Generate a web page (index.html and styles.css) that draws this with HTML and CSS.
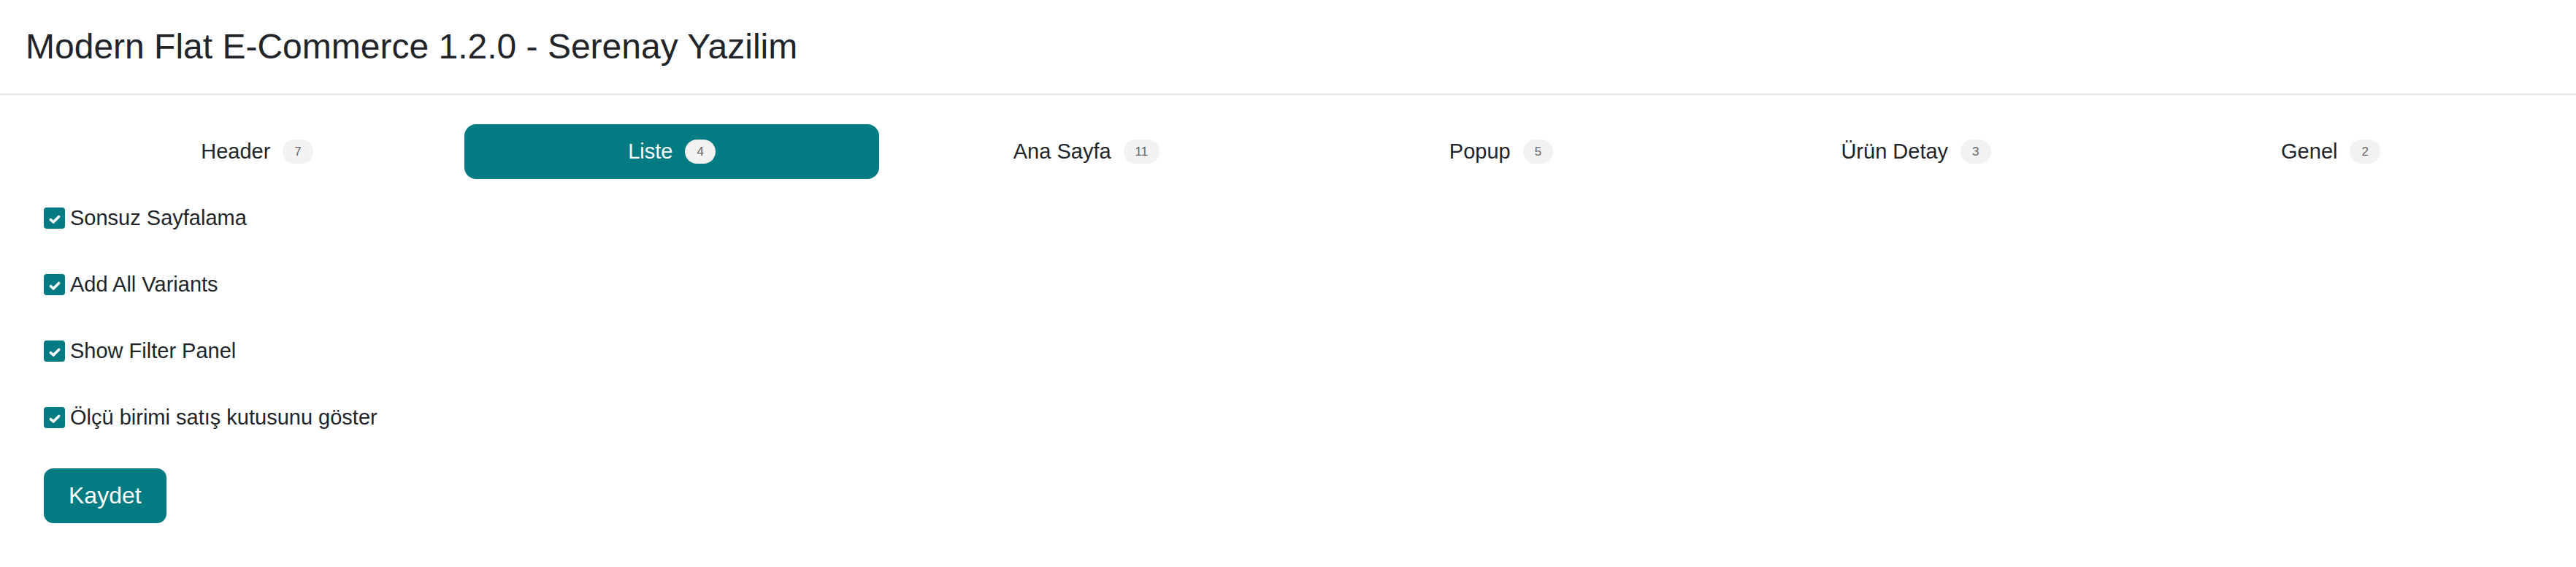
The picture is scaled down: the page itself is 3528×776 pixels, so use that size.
FILE: index.html
```html
<!DOCTYPE html>
<html lang="tr">
<head>
  <meta charset="UTF-8" />
  <meta name="viewport" content="width=device-width, initial-scale=1.0"/>
  <title>Modern Flat E-Commerce - Ayarlar</title>
  <link rel="stylesheet" href="styles.css">
</head>
<body>

<header class="page-header">
  <h1>Modern Flat E-Commerce 1.2.0 - Serenay Yazilim</h1>
</header>

<div class="content">
  <!-- Tabs -->
  <nav class="tabs">
    <a class="tab" href="#">Header <span class="badge">7</span></a>
    <a class="tab active" href="#">Liste <span class="badge">4</span></a>
    <a class="tab" href="#">Ana Sayfa <span class="badge">11</span></a>
    <a class="tab" href="#">Popup <span class="badge">5</span></a>
    <a class="tab" href="#">Ürün Detay <span class="badge">3</span></a>
    <a class="tab" href="#">Genel <span class="badge">2</span></a>
  </nav>

  <!-- Liste settings -->
  <form class="settings" action="#" method="POST">
    <label class="check">
      <input type="checkbox" name="infinite_scroll" checked>
      <span class="box"><svg viewBox="0 0 16 16"><polyline points="3.5,8.5 6.5,11.2 12.5,5.2"/></svg></span>
      Sonsuz Sayfalama
    </label>
    <label class="check">
      <input type="checkbox" name="add_all_variants" checked>
      <span class="box"><svg viewBox="0 0 16 16"><polyline points="3.5,8.5 6.5,11.2 12.5,5.2"/></svg></span>
      Add All Variants
    </label>
    <label class="check">
      <input type="checkbox" name="show_filter_panel" checked>
      <span class="box"><svg viewBox="0 0 16 16"><polyline points="3.5,8.5 6.5,11.2 12.5,5.2"/></svg></span>
      Show Filter Panel
    </label>
    <label class="check">
      <input type="checkbox" name="unit_box" checked>
      <span class="box"><svg viewBox="0 0 16 16"><polyline points="3.5,8.5 6.5,11.2 12.5,5.2"/></svg></span>
      Ölçü birimi satış kutusunu göster
    </label>
    <button type="submit">Kaydet</button>
  </form>
</div>

</body>
</html>
```

FILE: styles.css
```css
body {
  font-family: "Liberation Sans", Arial, sans-serif;
  background-color: #fff;
  color: #212529;
  margin: 0;
  padding: 0;
}
.page-header {
  padding: 35px 35px;
  border-bottom: 2px solid #e6e6e6;
}
.page-header h1 {
  margin: 0;
  font-size: 48px;
  line-height: 58px;
  font-weight: normal;
}
.content {
  padding: 40px 52px 40px 60px;
}
.tabs {
  display: grid;
  grid-template-columns: repeat(6, 1fr);
  margin-left: 8px;
}
.tab {
  display: flex;
  justify-content: center;
  align-items: center;
  gap: 17px;
  height: 75px;
  border-radius: 16px;
  color: #212529;
  text-decoration: none;
  font-size: 29px;
}
.tab.active {
  background-color: #037b83;
  color: #fff;
}
.badge {
  display: inline-block;
  padding: 8px 16px;
  font-size: 17px;
  line-height: 17px;
  border-radius: 17px;
  background-color: #f2f2f2;
  color: #666;
}
.settings {
  margin-top: 39px;
}
.check {
  display: flex;
  align-items: center;
  height: 29px;
  margin-bottom: 62px;
  font-size: 29px;
  cursor: pointer;
}
.check:last-of-type {
  margin-bottom: 55px;
}
.check input {
  display: none;
}
.box {
  display: flex;
  justify-content: center;
  align-items: center;
  width: 29px;
  height: 29px;
  margin-right: 7px;
  border-radius: 4px;
  background-color: #037b83;
}
.box svg {
  width: 20px;
  height: 20px;
  margin-top: 2px;
  fill: none;
  stroke: #fff;
  stroke-width: 2.9;
  stroke-linecap: round;
  stroke-linejoin: round;
}
button {
  height: 75px;
  padding: 0 34px;
  background-color: #037b83;
  color: #fff;
  border: none;
  border-radius: 13px;
  cursor: pointer;
  font-family: inherit;
  font-size: 32px;
}
button:hover {
  background-color: #036a71;
}
```
